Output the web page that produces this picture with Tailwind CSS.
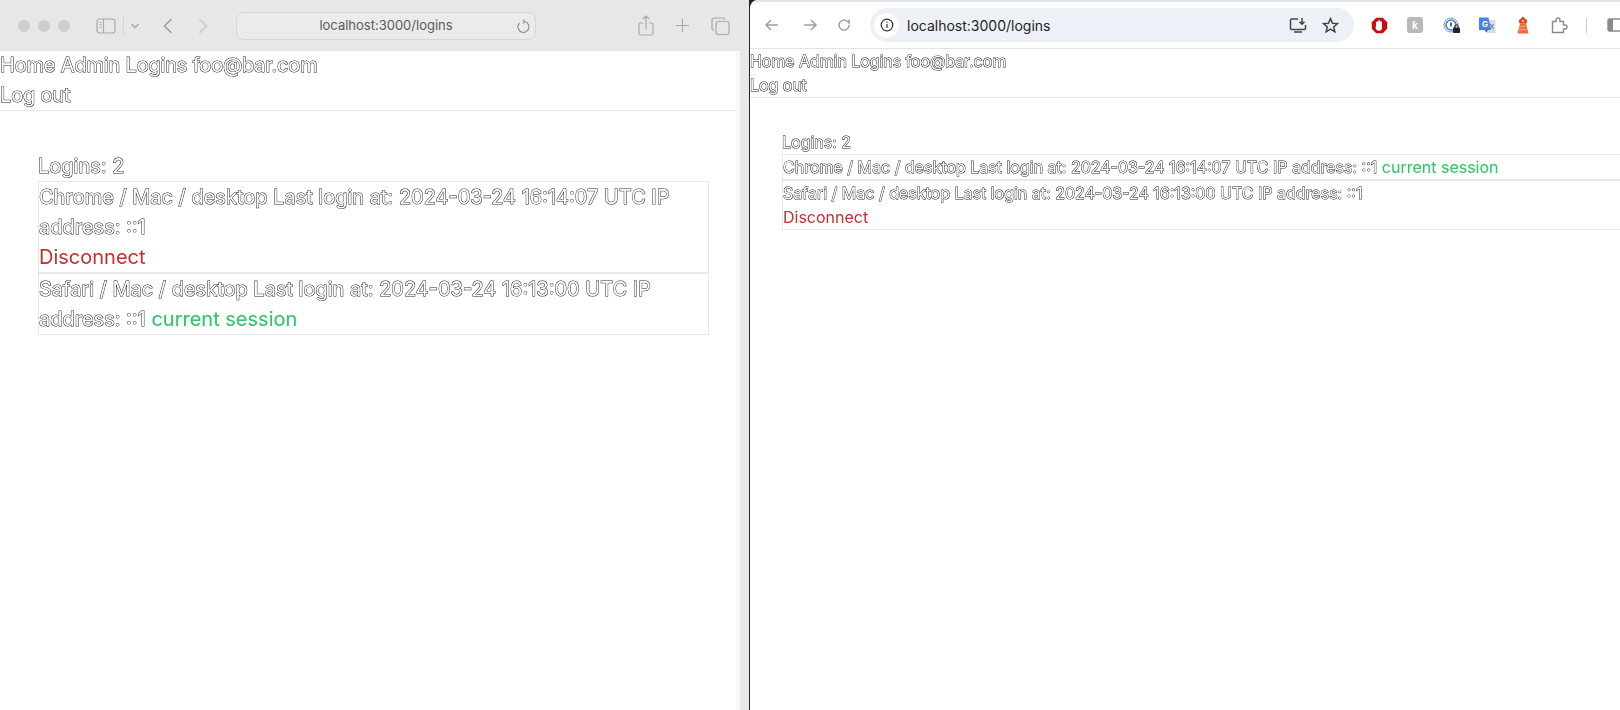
<!DOCTYPE html>
<html lang="en">
<head>
  <meta charset="UTF-8">
  <title>Logins</title>
  <script src="https://cdn.jsdelivr.net/npm/@tailwindcss/browser@4"></script>
</head>
<body class="bg-white h-[710px] w-[1620px] overflow-hidden font-['Inter',sans-serif]">
  <div class="flex h-[710px] bg-[#222]">
    <!-- Safari window -->
    <section class="w-[749px] flex flex-col shrink-0 bg-white">
      <div class="h-[51px] bg-[#e7e7e7] flex items-center pl-[18px] text-[#a9a9a9]">
        <span class="w-3 h-3 rounded-full bg-[#cdcdcd]"></span>
        <span class="w-3 h-3 rounded-full bg-[#cdcdcd] ml-2"></span>
        <span class="w-3 h-3 rounded-full bg-[#cdcdcd] ml-2"></span>
        <svg class="ml-[26px]" width="20" height="16" viewBox="0 0 20 16" fill="none" stroke="currentColor" stroke-width="1.2"><rect x="1" y="1" width="18" height="14" rx="2.5"/><path d="M7.5 1v14M3.5 4.5h2M3.5 7h2M3.5 9.5h2"/></svg>
        <span class="w-px h-[18px] bg-[#d4d4d4] ml-[7px]"></span>
        <svg class="ml-[6px]" width="10" height="6" viewBox="0 0 10 6" fill="none" stroke="currentColor" stroke-width="1.4"><path d="M1.5 1l3.500 3.500L8.500 1"/></svg>
        <svg class="ml-[23px]" width="10" height="16" viewBox="0 0 10 16" fill="none" stroke="#9b9b9b" stroke-width="1.5"><path d="M8.500 1L1.500 8l7 7"/></svg>
        <svg class="ml-[25px] text-[#c9c9c9]" width="10" height="16" viewBox="0 0 10 16" fill="none" stroke="currentColor" stroke-width="1.5"><path d="M1.500 1l7 7-7 7"/></svg>
        <div class="relative ml-[28px] w-[300px] h-[28px] rounded-lg border border-[#d6d6d6] bg-[#ebebeb] flex items-center justify-center text-[13px] text-[#5c5c5c]">
          localhost:3000/logins
          <svg class="absolute right-[5px] top-[6px]" width="14" height="15" viewBox="0 0 14 15" fill="none" stroke="#8a8a8a" stroke-width="1.1"><path d="M8.500 2.500A5.500 5.500 0 1 1 3.500 4M7 .8l1.800 1.700L7 4.300"/></svg>
        </div>
        <svg class="ml-[102px]" width="16" height="21" viewBox="0 0 16 21" fill="none" stroke="currentColor" stroke-width="1.2"><path d="M5 8H2.500A1.500 1.500 0 0 0 1 9.500v9A1.500 1.500 0 0 0 2.500 20h11a1.500 1.500 0 0 0 1.500-1.500v-9A1.500 1.500 0 0 0 13.500 8H11M8 14V1M4.800 4L8 1l3.200 3"/></svg>
        <svg class="ml-[21px]" width="15" height="15" viewBox="0 0 15 15" fill="none" stroke="currentColor" stroke-width="1.2"><path d="M7.500 1v13M1 7.500h13"/></svg>
        <svg class="ml-[21px]" width="19" height="18" viewBox="0 0 19 18" fill="none" stroke="currentColor" stroke-width="1.2"><rect x="5" y="4.500" width="13" height="13" rx="2.500"/><path d="M3 13.500A2 2 0 0 1 1 11.500V3a2 2 0 0 1 2-2h8.500a2 2 0 0 1 2 2"/></svg>
      </div>
      <div class="flex-1 flex min-h-0">
        <main class="flex-1 min-w-0 text-[20px] leading-[30px] text-white [-webkit-text-stroke:1px_#222] [paint-order:stroke_fill] will-change-transform">
          <nav class="border-b border-[#e5e7eb] leading-[29.5px] tracking-[-0.18px]">
            <div>Home Admin Logins foo@bar.com</div>
            <div>Log out</div>
          </nav>
          <div class="pl-[38px] pt-[40px] w-[709px]">
            <div>Logins: 2</div>
            <div class="border border-[#e5e7eb]">
              Chrome / Mac / desktop Last login at: 2024-03-24 16:14:07 UTC IP address: ::1
              <div class="text-[#c0302f] [-webkit-text-stroke:0px]">Disconnect</div>
            </div>
            <div class="border border-[#e5e7eb]">
              Safari / Mac / desktop Last login at: 2024-03-24 16:13:00 UTC IP address: ::1
              <span class="text-[#3cbf6e] [-webkit-text-stroke:0px] [text-shadow:0_0_2px_#86efac80]">current session</span>
            </div>
          </div>
        </main>
        <div class="w-[13px] bg-[#f9f9f9] flex justify-end"><div class="w-[9px] bg-[#e8e8e8]"></div></div>
      </div>
    </section>
    <div class="w-px shrink-0"></div>

    <!-- Chrome window -->
    <section class="flex-1 min-w-0 flex flex-col bg-white rounded-tl-lg overflow-hidden">
      <div class="h-[2px] bg-[#dfe3e9] rounded-tl-lg"></div>
      <div class="h-[47px] border-b border-[#e3e3e3] flex items-center pl-[14px] text-[#a0a0a0]">
        <svg width="16" height="14" viewBox="0 0 16 14" fill="none" stroke="currentColor" stroke-width="1.500"><path d="M14 7H2M7 2L2 7l5 5"/></svg>
        <svg class="ml-[22px]" width="16" height="14" viewBox="0 0 16 14" fill="none" stroke="currentColor" stroke-width="1.500"><path d="M2 7h12M9 2l5 5-5 5"/></svg>
        <svg class="ml-[19px]" width="14" height="14" viewBox="0 0 14 14" fill="none" stroke="currentColor" stroke-width="1.500"><path d="M12 7a5 5 0 1 1-1.500-3.500L12 5V1.500"/></svg>
        <div class="ml-[19px] w-[484px] h-[34px] rounded-full bg-[#edf0f7] flex items-center pl-[4px] text-[14px] text-[#1f1f1f]">
          <span class="w-[25px] h-[25px] rounded-full bg-white flex items-center justify-center">
            <svg width="14" height="14" viewBox="0 0 14 14" fill="none" stroke="#333" stroke-width="1.200"><circle cx="7" cy="7" r="5.800"/><path d="M7 6v4M7 3.600v1.200"/></svg>
          </span>
          <span class="ml-[8px]">localhost:3000/logins</span>
          <svg class="ml-auto" width="18" height="16" viewBox="0 0 18 16" fill="none" stroke="#444" stroke-width="1.500"><path d="M9 2H2.500A1.200 1.200 0 0 0 1.500 3v8.500a1 1 0 0 0 1 1h13a1 1 0 0 0 1-1V8M5 15h8M13 1v6M10.500 4.800L13 7.300l2.500-2.500"/></svg>
          <svg class="ml-[15px] mr-[15px]" width="17" height="16" viewBox="0 0 17 16" fill="none" stroke="#444" stroke-width="1.500"><path d="M8.500 1.500l2 4.700 5 .4-3.800 3.300 1.200 4.900-4.400-2.600-4.400 2.600 1.200-4.900L1.500 6.600l5-.4z"/></svg>
        </div>
        <svg class="ml-[17px]" width="17" height="17" viewBox="0 0 17 17"><path d="M5.200 .8h6.600l4.400 4.400v6.600l-4.400 4.400H5.200L.8 11.800V5.200z" fill="#c80f0f"/><path d="M5 9V5.200a.8.8 0 0 1 1.500 0V4a.8.8 0 0 1 1.500 0v-.2a.8.8 0 0 1 1.500 0V5a.8.8 0 0 1 1.500 0v5.500c0 2-1 3.300-3 3.300s-3-1-3.500-3z" fill="#fff"/></svg>
        <span class="ml-[19px] w-4 h-4 rounded-[3px] bg-[#b9b9b9] text-white text-[10px] leading-4 text-center font-bold">ƙ</span>
        <svg class="ml-[20px]" width="17" height="17" viewBox="0 0 17 17" fill="none"><circle cx="8" cy="8" r="7" stroke="#8a96a8" stroke-width="1"/><circle cx="8" cy="8" r="5" stroke="#3d80dc" stroke-width="1.500"/><path d="M8 5.500v4" stroke="#333" stroke-width="1.500"/><rect x="10" y="10.500" width="7" height="5.500" rx="1" fill="#222"/><path d="M11.700 10.500V9.500a1.800 1.800 0 0 1 3.600 0v1" stroke="#222"/></svg>
        <svg class="ml-[19px]" width="17" height="18" viewBox="0 0 17 18"><path d="M8 4h8.500v13H8z" fill="#d6dae2"/><path d="M0 1.500h9.500L12 14H0z" fill="#4a80e8"/><path d="M9 13.500l-1.500 3L5.500 14z" fill="#2d5fc4"/><text x="3" y="10.500" font-size="8" font-weight="700" fill="#fff">G</text><path d="M11 8l3.500 5M14.500 8l-3.500 5" stroke="#6b7280" stroke-width="1"/></svg>
        <svg class="ml-[19px]" width="16" height="18" viewBox="0 0 16 18"><path d="M5 7.500h6l2.500 10h-11z" fill="#ed6b3d"/><rect x="4" y="3" width="8" height="4.500" rx="1.500" fill="#d9482b"/><path d="M5.500 3L8 .5 10.500 3z" fill="#c9432a"/><circle cx="8" cy="5" r="1.300" fill="#f5c33b"/><path d="M4 11l8-1M3.500 14l9.500-1" stroke="#f6a88a" stroke-width="1"/></svg>
        <svg class="ml-[20px]" width="17" height="17" viewBox="0 0 17 17" fill="none" stroke="#8a8a8a" stroke-width="1.400"><path d="M1.500 4.500h3.500V3a2 2 0 0 1 4 0v1.500h3.500v3.500H14a2 2 0 0 1 0 4h-1.500v3.500h-11z"/></svg>
        <span class="ml-[18px] w-px h-[15px] bg-[#c7ced8]"></span>
        <svg class="ml-[20px]" width="13" height="14" viewBox="0 0 13 14" fill="none"><rect x="1" y="1" width="16" height="12" rx="1.500" stroke="#8a8a8a" stroke-width="1.400"/><rect x="1" y="1" width="5" height="12" fill="#8a8a8a"/></svg>
      </div>
      <main class="flex-1 min-h-0 text-[16px] leading-[24px] text-white [-webkit-text-stroke:0.9px_#111] [paint-order:stroke_fill] will-change-transform">
        <nav class="border-b border-[#e5e7eb] tracking-[-0.07px]">
          <div>Home Admin Logins foo@bar.com</div>
          <div>Log out</div>
        </nav>
        <div class="pl-[32px] pt-[32px] w-[1000px]">
          <div>Logins: 2</div>
          <div class="border border-[#e5e7eb]">
            Chrome / Mac / desktop Last login at: 2024-03-24 16:14:07 UTC IP address: ::1
            <span class="text-[#3cbf6e] [-webkit-text-stroke:0px] [text-shadow:0_0_2px_#86efac80]">current session</span>
          </div>
          <div class="border border-[#e5e7eb]">
            Safari / Mac / desktop Last login at: 2024-03-24 16:13:00 UTC IP address: ::1
            <div class="text-[#c0302f] [-webkit-text-stroke:0px]">Disconnect</div>
          </div>
        </div>
      </main>
    </section>
  </div>
</body>
</html>
